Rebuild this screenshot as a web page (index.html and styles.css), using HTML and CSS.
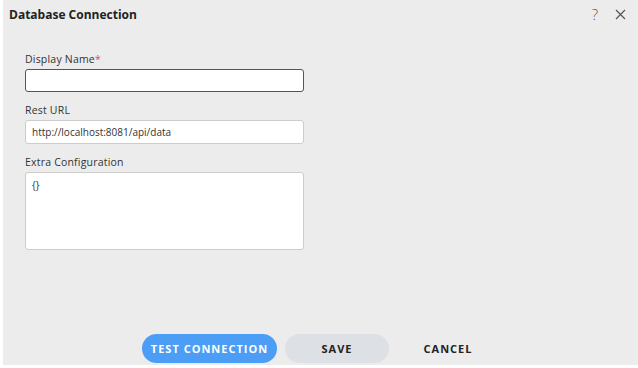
FILE: index.html
```html
<!DOCTYPE html>
<html>
<head lang="en">
<meta charset="UTF-8">
<title>Database Connection</title>
<link rel="stylesheet" href="styles.css">
</head>
<body>
  <div class="dialog">
    <div class="dialog-head">
      <span class="title">Database Connection</span>
      <span class="tools">
        <span class="tool help">?</span>
        <span class="tool close">
          <svg width="11" height="11" viewBox="0 0 11 11"><path d="M1 1L10 10M10 1L1 10" stroke="#555" stroke-width="1.2" fill="none"/></svg>
        </span>
      </span>
    </div>

    <div class="form">
      <div class="field">
        <label for="display_name">Display Name<span class="req">*</span></label>
        <input type="text" id="display_name" class="focused"/>
      </div>
      <div class="field">
        <label for="rest_url">Rest URL</label>
        <input type="text" id="rest_url" value="http://localhost:8081/api/data"/>
      </div>
      <div class="field">
        <label for="extra_conf">Extra Configuration</label>
        <textarea id="extra_conf">{}</textarea>
      </div>
    </div>

    <div class="actions">
      <button class="button btn-test">TEST CONNECTION</button>
      <button class="button btn-save">SAVE</button>
      <button class="button btn-cancel">CANCEL</button>
    </div>
  </div>
</body>
</html>
```

FILE: styles.css
```css
html, body { margin: 0; padding: 0; background: #fff; }
body {
font-family: "Open Sans", "Noto Sans", Arial, sans-serif;
color: #333;
font-size: 11px;
}
* { outline: none; box-sizing: border-box; }
.dialog {
margin-left: 3px;
width: 635px;
height: 365px;
background: #ececec;
display: flex;
flex-direction: column;
}
.dialog-head {
display: flex;
justify-content: space-between;
align-items: center;
height: 28px;
padding: 0 12px 0 6px;
}
.title { font-weight: bold; font-size: 12px; color: #222; }
.tools { display: flex; align-items: center; gap: 17px; }
.tool { color: #555; display: inline-flex; }
.help { font-size: 15px; font-weight: 300; }
.form {
padding: 24px 0 0 22px;
width: 301px;
display: flex;
flex-direction: column;
gap: 11px;
}
.field { display: flex; flex-direction: column; }
label {
font-size: 10.5px;
color: #333;
letter-spacing: 0.2px;
line-height: 14px;
margin-bottom: 3px;
}
.req { color: #d9534f; }
input[type=text], textarea {
font-family: inherit;
font-size: 10px;
color: #333;
background: #fff;
border: 1px solid #ccc;
border-radius: 3px;
padding: 0 6px;
width: 279px;
height: 24px;
margin: 0;
}
input.focused { border-color: #555; height: 23px; }
textarea {
height: 78px;
padding: 5px 6px;
resize: none;
}
.actions {
margin-top: auto;
display: flex;
justify-content: center;
gap: 8px;
padding: 0 0 2px 0;
}
.button {
font-family: inherit;
font-weight: bold;
font-size: 11px;
letter-spacing: 1px;
height: 29px;
border: none;
border-radius: 15px;
cursor: pointer;
padding: 0;
}
.btn-test { background: #4b9df5; color: #fff; width: 135px; }
.btn-save { background: #dde0e4; color: #222; width: 104px; }
.btn-cancel { background: transparent; color: #222; width: 102px; }
```
